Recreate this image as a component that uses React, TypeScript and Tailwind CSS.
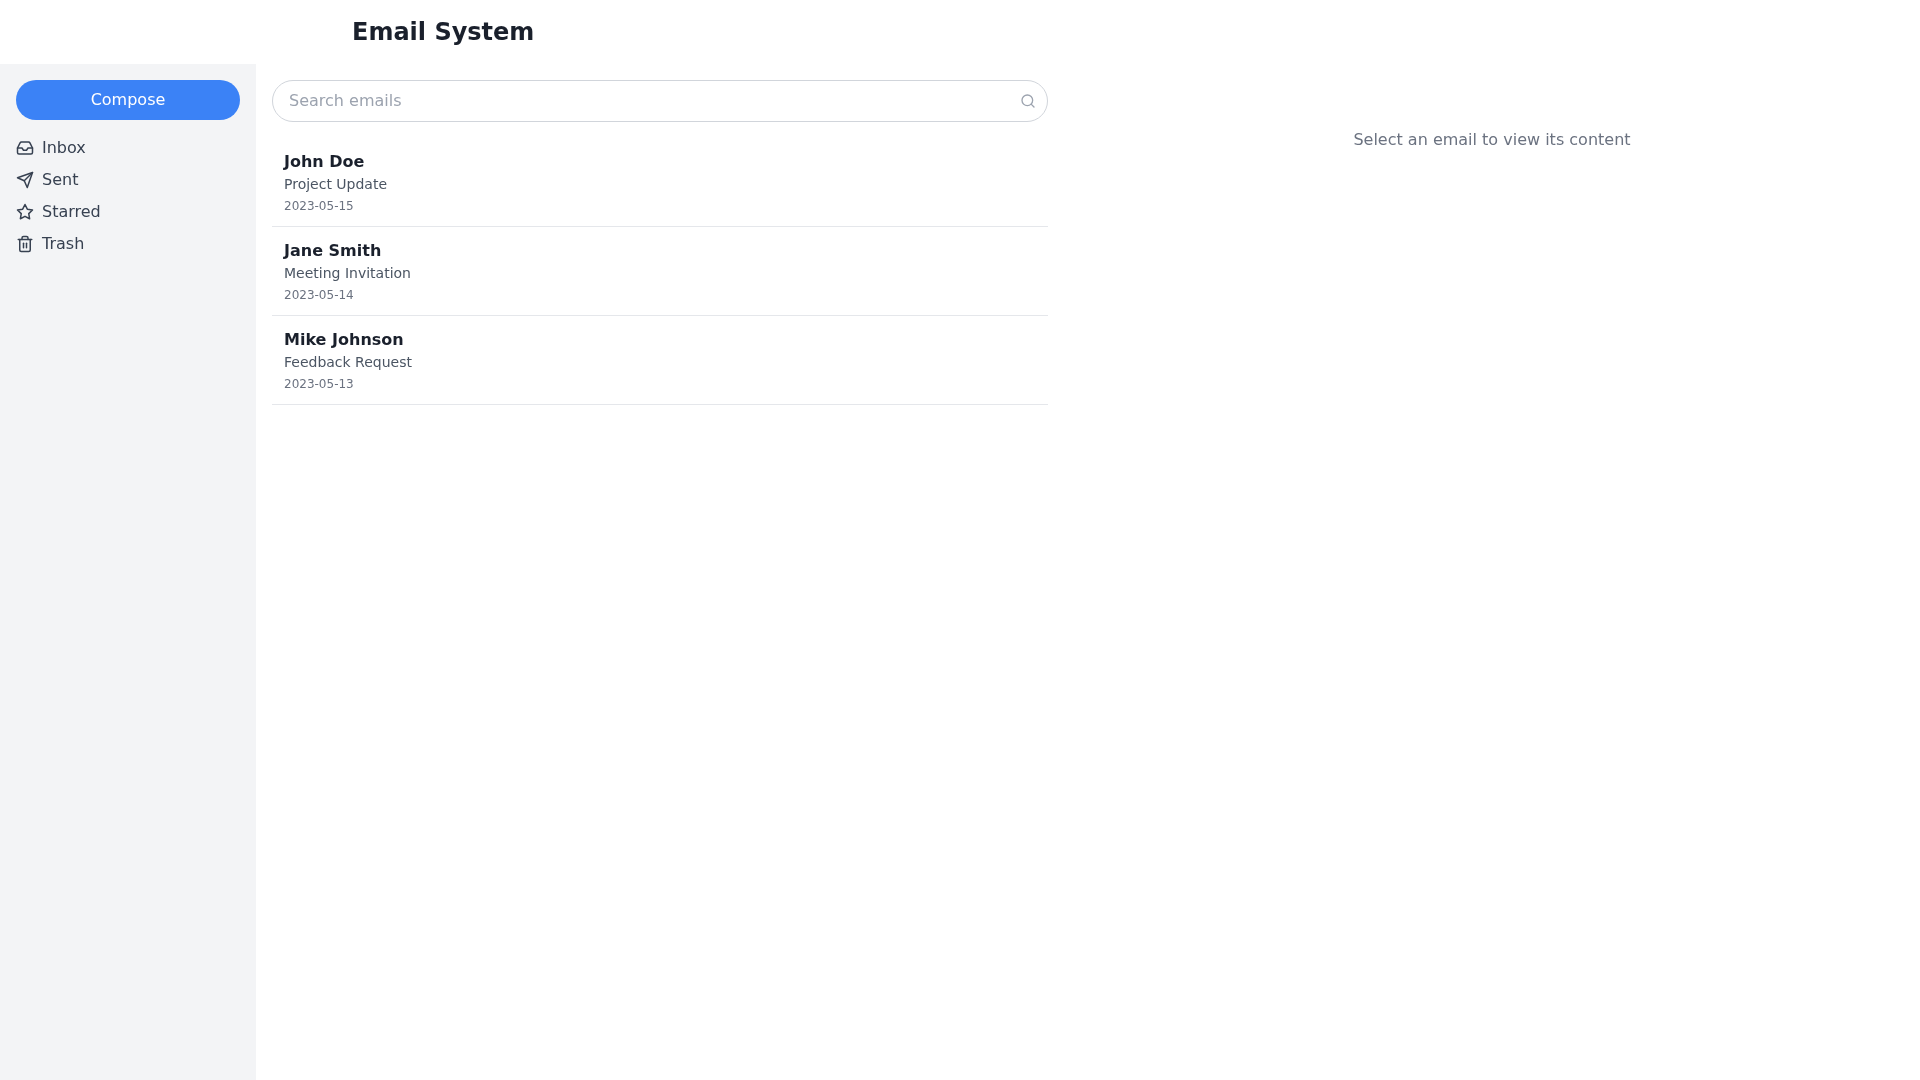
import React from 'react';
import { Inbox, Search, Trash2 } from 'lucide-react';

interface IconProps {
  size?: number;
}

const SendIcon: React.FC<IconProps> = ({ size = 18 }) => (
  <svg width={size} height={size} viewBox="0 0 24 24" fill="none" stroke="currentColor" strokeWidth="2" strokeLinecap="round" strokeLinejoin="round">
    <path d="m22 2-7 20-4-9-9-4Z" />
    <path d="M22 2 11 13" />
  </svg>
);

const StarIcon: React.FC<IconProps> = ({ size = 18 }) => (
  <svg width={size} height={size} viewBox="0 0 24 24" fill="none" stroke="currentColor" strokeWidth="2" strokeLinecap="round" strokeLinejoin="round">
    <polygon points="12 2 15.09 8.26 22 9.27 17 14.14 18.18 21.02 12 17.77 5.82 21.02 7 14.14 2 9.27 8.91 8.26 12 2" />
  </svg>
);

const navItems = [
  { label: 'Inbox', icon: Inbox },
  { label: 'Sent', icon: SendIcon },
  { label: 'Starred', icon: StarIcon },
  { label: 'Trash', icon: Trash2 },
];

const emails = [
  { sender: 'John Doe', subject: 'Project Update', date: '2023-05-15' },
  { sender: 'Jane Smith', subject: 'Meeting Invitation', date: '2023-05-14' },
  { sender: 'Mike Johnson', subject: 'Feedback Request', date: '2023-05-13' },
];

const App: React.FC = () => {
  return (
    <div className="flex h-screen flex-col overflow-hidden bg-white font-['DejaVu_Sans',sans-serif] antialiased will-change-transform">
      <header className="flex h-16 shrink-0 items-center pl-[352px]">
        <h1 className="text-2xl font-bold text-[#1a202c]">Email System</h1>
      </header>

      <div className="flex min-h-0 flex-1">
        <aside className="w-64 shrink-0 bg-[#f3f4f6] p-4">
          <button type="button" className="mb-3 h-10 w-full rounded-full bg-[#3b82f6] text-base text-white">
            Compose
          </button>
          <nav>
            {navItems.map(({ label, icon: Icon }) => (
              <a key={label} href="#" className="flex h-8 items-center gap-2 text-base text-[#374151]">
                <Icon size={18} />
                {label}
              </a>
            ))}
          </nav>
        </aside>

        <main className="w-[808px] shrink-0 p-4">
          <div className="relative mb-4">
            <input
              type="text"
              placeholder="Search emails"
              className="h-[42px] w-full rounded-full border border-[#d1d5db] px-4 pb-[2px] text-base outline-none placeholder:text-[#9ca3af]"
            />
            <Search size={16} className="absolute top-[13px] right-[12px] text-[#9ca3af]" />
          </div>
          <div>
            {emails.map((email) => (
              <div key={email.sender} className="border-b border-[#e5e7eb] px-3 py-3">
                <div className="text-base leading-6 font-bold text-[#1a202c]">{email.sender}</div>
                <div className="text-sm text-[#4b5563]">{email.subject}</div>
                <div className="mt-1 text-xs text-[#6b7280]">{email.date}</div>
              </div>
            ))}
          </div>
        </main>

        <section className="flex-1 p-4 pt-[64px] text-center text-base text-[#6b7280]">
          Select an email to view its content
        </section>
      </div>
    </div>
  );
};

export default App;
